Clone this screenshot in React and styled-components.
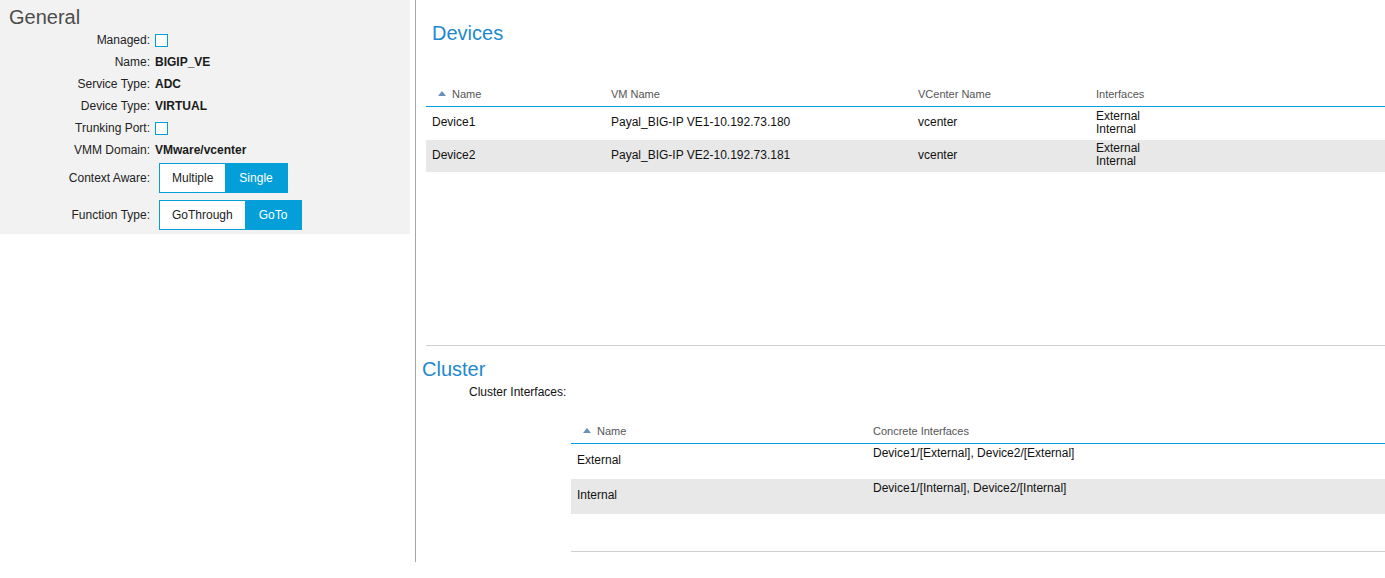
import React from 'react';
import styled, { createGlobalStyle } from 'styled-components';

const GlobalStyle = createGlobalStyle`
  body {
    margin: 0;
    background: #fff;
    font-family: "Liberation Sans", Arial, sans-serif;
    color: #111;
  }
`

const Page = styled.div`
  display: flex;
  height: 562px;
  overflow: hidden;
`
const LeftPane = styled.div`
  width: 415px;
  flex-shrink: 0;
  border-right: 1px solid #a6a6a6;
`
const GeneralBox = styled.div`
  width: 410px;
  background: #f2f2f2;
  padding: 6px 0 4px 0;
`
const GeneralTitle = styled.div`
  font-size: 20px;
  line-height: 23px;
  color: #4d4d4d;
  padding-left: 9px;
`
const FormRow = styled.div`
  display: grid;
  grid-template-columns: 150px 1fr;
  column-gap: 5px;
  align-items: center;
  height: ${props => props.tall ? '30px' : '22px'};
  margin-top: ${props => props.gap || 0}px;
  font-size: 12px;
`
const Label = styled.div`
  text-align: right;
  color: #222;
`
const Value = styled.div`
  font-weight: bold;
  color: #1a1a1a;
`
const Check = styled.span`
  display: inline-block;
  width: 11px;
  height: 11px;
  border: 1px solid #049fd9;
  background: #fff;
  vertical-align: middle;
`
const Segmented = styled.div`
  display: inline-flex;
  height: 30px;
  margin-left: 4px;
  box-sizing: border-box;
  border: 1px solid #049fd9;
  background: #fff;
`
const SegButton = styled.div`
  display: flex;
  align-items: center;
  padding: 0 ${props => props.pad || 12}px;
  font-size: 12px;
  background: ${props => props.active ? '#049fd9' : '#fff'};
  color: ${props => props.active ? '#fff' : '#222'};
`

const RightPane = styled.div`
  flex: 1;
  padding-left: 6px;
  display: flex;
  flex-direction: column;
`
const DevicesSection = styled.div`
  margin-left: 4px;
  height: 346px;
  box-sizing: border-box;
  border-bottom: 1px solid #cfcfcf;
`
const SectionTitle = styled.div`
  font-size: 20px;
  line-height: 22px;
  color: #1e88cf;
  padding-left: ${props => props.indent || 0}px;
  margin-top: ${props => props.top || 0}px;
`
const Table = styled.div`
  margin-top: ${props => props.top || 0}px;
`
const HeadRow = styled.div`
  display: grid;
  grid-template-columns: ${props => props.cols};
  height: 24px;
  align-items: center;
  border-bottom: 1px solid #00a0df;
  font-size: 11px;
  color: #555;
`
const HeadCell = styled.div`
  padding-left: ${props => props.sort ? 12 : 6}px;
  display: flex;
  align-items: center;
`
const SortArrow = styled.span`
  width: 0;
  height: 0;
  border-left: 4px solid transparent;
  border-right: 4px solid transparent;
  border-bottom: 5px solid #6b8fbf;
  margin-right: 6px;
  margin-top: -1px;
`
const Row = styled.div`
  display: grid;
  grid-template-columns: ${props => props.cols};
  height: ${props => props.h}px;
  background: ${props => props.shaded ? '#e8e8e8' : '#fff'};
  font-size: 12px;
  color: #111;
`
const Cell = styled.div`
  padding-left: 6px;
  display: flex;
  flex-direction: column;
  justify-content: ${props => props.top ? 'flex-start' : 'center'};
  padding-top: ${props => props.top ? 2 : 0}px;
  padding-bottom: ${props => props.top ? 0 : 2}px;
  line-height: ${props => props.tight ? '13px' : '15px'};
`
const SubLabel = styled.div`
  font-size: 12px;
  line-height: 14px;
  margin-left: 47px;
  margin-top: 5px;
  color: #111;
`
const ClusterBody = styled.div`
  margin-left: 149px;
  margin-top: 20px;
  height: 133px;
  box-sizing: border-box;
  border-bottom: 1px solid #cfcfcf;
`

const devices = [
  { name: 'Device1', vm: 'Payal_BIG-IP VE1-10.192.73.180', vc: 'vcenter' },
  { name: 'Device2', vm: 'Payal_BIG-IP VE2-10.192.73.181', vc: 'vcenter' },
]
const clusterIfs = [
  { name: 'External', concrete: 'Device1/[External], Device2/[External]' },
  { name: 'Internal', concrete: 'Device1/[Internal], Device2/[Internal]' },
]

const devCols = '179px 307px 178px 1fr'
const clusterCols = '296px 1fr'

export default function App() {
  return (
    <Page>
      <GlobalStyle />
      <LeftPane>
        <GeneralBox>
          <GeneralTitle>General</GeneralTitle>
          <FormRow><Label>Managed:</Label><div><Check /></div></FormRow>
          <FormRow><Label>Name:</Label><Value>BIGIP_VE</Value></FormRow>
          <FormRow><Label>Service Type:</Label><Value>ADC</Value></FormRow>
          <FormRow><Label>Device Type:</Label><Value>VIRTUAL</Value></FormRow>
          <FormRow><Label>Trunking Port:</Label><div><Check /></div></FormRow>
          <FormRow><Label>VMM Domain:</Label><Value>VMware/vcenter</Value></FormRow>
          <FormRow tall gap={2}>
            <Label>Context Aware:</Label>
            <div>
              <Segmented>
                <SegButton pad={12}>Multiple</SegButton>
                <SegButton active pad={14}>Single</SegButton>
              </Segmented>
            </div>
          </FormRow>
          <FormRow tall gap={7}>
            <Label>Function Type:</Label>
            <div>
              <Segmented>
                <SegButton pad={12}>GoThrough</SegButton>
                <SegButton active pad={14}>GoTo</SegButton>
              </Segmented>
            </div>
          </FormRow>
        </GeneralBox>
      </LeftPane>
      <RightPane>
        <DevicesSection>
          <SectionTitle indent={6} top={22}>Devices</SectionTitle>
          <Table top={38}>
            <HeadRow cols={devCols}>
              <HeadCell sort><SortArrow />Name</HeadCell>
              <HeadCell>VM Name</HeadCell>
              <HeadCell>VCenter Name</HeadCell>
              <HeadCell>Interfaces</HeadCell>
            </HeadRow>
            {devices.map((d, i) => (
              <Row key={d.name} cols={devCols} h={i === 0 ? 33 : 32} shaded={i % 2 === 1}>
                <Cell>{d.name}</Cell>
                <Cell>{d.vm}</Cell>
                <Cell>{d.vc}</Cell>
                <Cell tight><span>External</span><span>Internal</span></Cell>
              </Row>
            ))}
          </Table>
        </DevicesSection>
        <SectionTitle top={12}>Cluster</SectionTitle>
        <SubLabel>Cluster Interfaces:</SubLabel>
        <ClusterBody>
          <HeadRow cols={clusterCols}>
            <HeadCell sort><SortArrow />Name</HeadCell>
            <HeadCell>Concrete Interfaces</HeadCell>
          </HeadRow>
          {clusterIfs.map((c, i) => (
            <Row key={c.name} cols={clusterCols} h={35} shaded={i % 2 === 1}>
              <Cell>{c.name}</Cell>
              <Cell top>{c.concrete}</Cell>
            </Row>
          ))}
        </ClusterBody>
      </RightPane>
    </Page>
  )
}
